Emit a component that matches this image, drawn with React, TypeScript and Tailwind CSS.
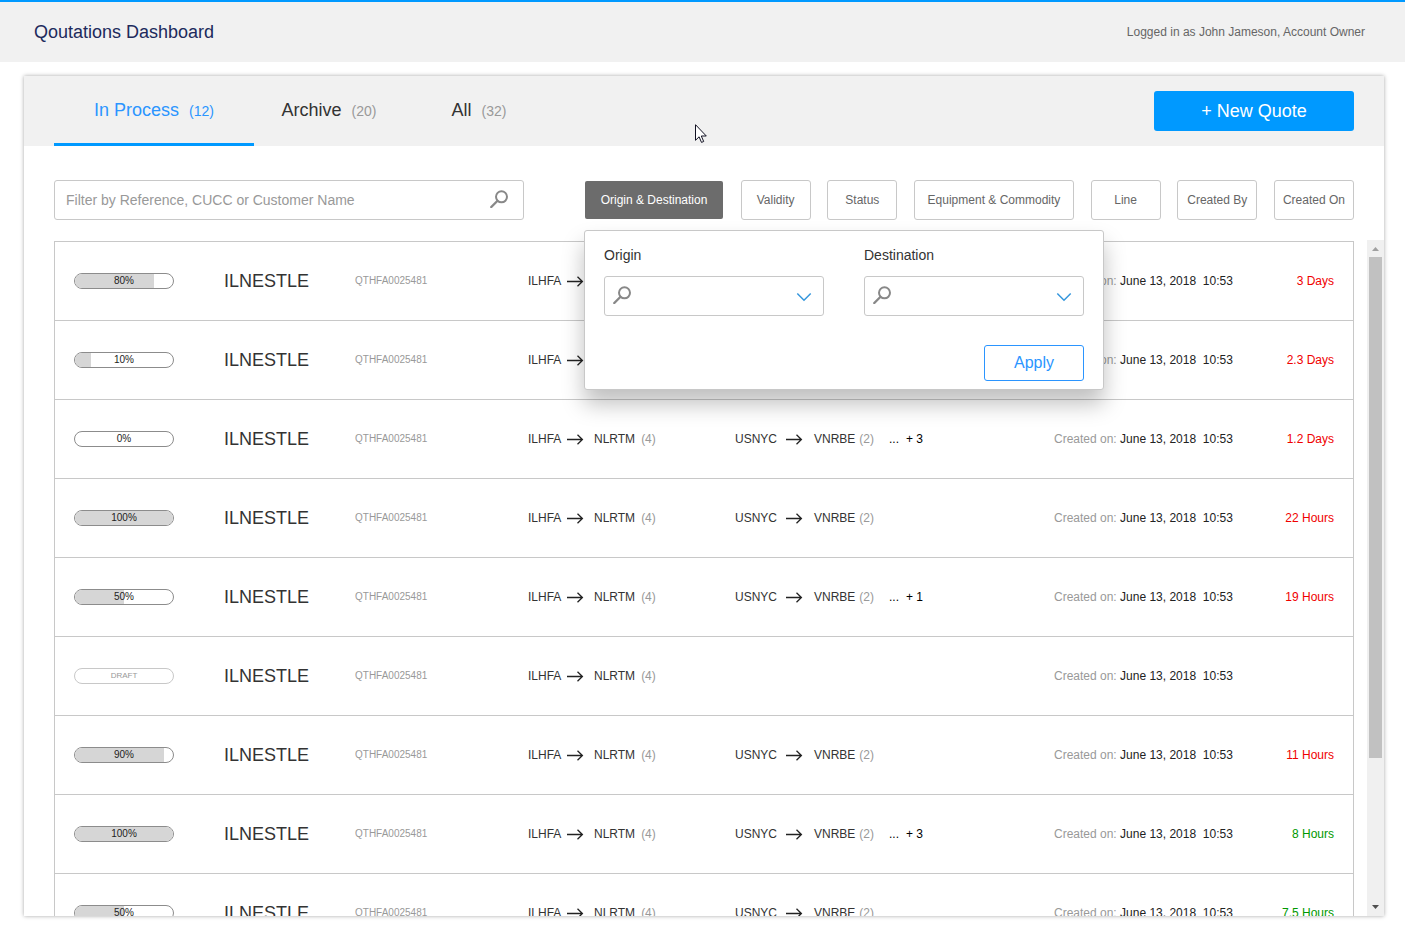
import { useState } from "react";
import clsx from "clsx";

type Quote = {
  progress: number | null;
  fill: number;
  extra?: string;
  second: boolean;
  due: string;
  dueColor: string;
};

const red = "text-[#f00000]";
const green = "text-[#009900]";

const quotes: Quote[] = [
  { progress: 80, fill: 81, second: true, due: "3 Days", dueColor: red },
  { progress: 10, fill: 16, second: true, due: "2.3 Days", dueColor: red },
  { progress: 0, fill: 0, extra: "+ 3", second: true, due: "1.2 Days", dueColor: red },
  { progress: 100, fill: 100, second: true, due: "22 Hours", dueColor: red },
  { progress: 50, fill: 50, extra: "+ 1", second: true, due: "19 Hours", dueColor: red },
  { progress: null, fill: 0, second: false, due: "", dueColor: red },
  { progress: 90, fill: 91, second: true, due: "11 Hours", dueColor: red },
  { progress: 100, fill: 100, extra: "+ 3", second: true, due: "8 Hours", dueColor: green },
  { progress: 50, fill: 50, second: true, due: "7.5 Hours", dueColor: green },
];

const tabs = [
  { label: "In Process", count: 12, width: "w-[200px]" },
  { label: "Archive", count: 20, width: "w-[150px]" },
  { label: "All", count: 32, width: "w-[150px]" },
];

const filters = [
  { label: "Validity", width: "w-[70px]" },
  { label: "Status", width: "w-[70px]" },
  { label: "Equipment & Commodity", width: "w-[160px]" },
  { label: "Line", width: "w-[70px]" },
  { label: "Created By", width: "w-20" },
  { label: "Created On", width: "w-20" },
];

function SearchIcon({ className }: { className?: string }) {
  return (
    <svg viewBox="0 0 18 18" className={clsx("w-[18px] h-[18px]", className)} fill="none" stroke="#888888" strokeWidth="2">
      <circle cx="11.5" cy="6.8" r="5.5" />
      <path d="M7.3 11 1.3 17" strokeWidth="2.4" strokeLinecap="round" />
    </svg>
  );
}

function Arrow() {
  return (
    <svg viewBox="0 0 17 12" className="w-[17px] h-3 shrink-0" fill="none" stroke="#222222" strokeWidth="1.3">
      <path d="M0 6.5h15.5M10.5 1.7l4.9 4.8-4.9 4.8" />
    </svg>
  );
}

function Progress({ progress, fill }: { progress: number | null; fill: number }) {
  if (progress === null) {
    return (
      <div className="w-[100px] h-4 rounded-full border border-[#c8c8c8] flex items-center justify-center text-[8px] text-[#999999]">
        DRAFT
      </div>
    );
  }

  return (
    <div className="relative w-[100px] h-4 rounded-full border border-[#8c8c8c] overflow-hidden">
      <div className="h-full bg-[#d6d6d6]" style={{ width: `${fill}%` }} />
      <span className="absolute inset-0 flex items-center justify-center text-[10px] leading-none text-[#222222]">
        {progress}%
      </span>
    </div>
  );
}

function PortSelect({ id, label }: { id: string; label: string }) {
  return (
    <div className="flex-1">
      <label htmlFor={id} className="block text-sm leading-5 text-[#333333]">
        {label}
      </label>
      <div className="relative mt-[11px]">
        <select id={id} className="block w-full h-10 pl-9 pr-9 appearance-none bg-white border border-[#c8c8c8] rounded-[3px] text-sm">
          <option value=""></option>
        </select>
        <SearchIcon className="absolute left-[9px] top-[10px] pointer-events-none" />
        <svg
          viewBox="0 0 16 10"
          className="absolute right-3 top-4 w-4 h-[10px] pointer-events-none"
          fill="none"
          stroke="#3496dc"
          strokeWidth="1.5"
        >
          <path d="M1.3 1.5 8 8.2l6.7-6.7" />
        </svg>
      </div>
    </div>
  );
}

export default function App() {
  const [tab, setTab] = useState("In Process");
  const [open, setOpen] = useState(true);

  return (
    <div className="relative h-screen flex flex-col bg-white font-['Liberation_Sans',Arial,sans-serif] text-[#333333]">
      {/* Header */}
      <header className="h-[62px] shrink-0 border-t-2 border-[#0099ff] bg-[#f1f1f1] flex items-center justify-between pl-[34px] pr-10">
        <h1 className="text-lg text-[#202a5c]">Qoutations Dashboard</h1>
        <span className="text-xs text-[#666666]">Logged in as John Jameson, Account Owner</span>
      </header>

      <main className="flex-1 min-h-0 flex flex-col mt-3.5 ml-6 mr-[21px] mb-[22px] bg-white shadow-[0_0_4px_rgba(0,0,0,0.35)]">
        {/* Tabs */}
        <div className="h-[70px] shrink-0 bg-[#f1f1f1] px-[30px] flex items-center justify-between">
          <nav className="h-full flex">
            {tabs.map((t) => (
              <button
                key={t.label}
                onClick={() => setTab(t.label)}
                className={clsx(
                  "h-full flex items-center justify-center border-b-3",
                  t.width,
                  tab === t.label ? "border-[#0099ff] text-[#2b95ff]" : "border-transparent"
                )}
              >
                <span className="text-lg">{t.label}</span>
                <span className={clsx("ml-2.5 pt-0.5 text-sm", tab !== t.label && "text-[#999999]")}>({t.count})</span>
              </button>
            ))}
          </nav>
          <button className="w-[200px] h-10 rounded-[3px] bg-[#0099ff] text-white text-lg">+ New Quote</button>
        </div>

        {/* Search and filters */}
        <div className="shrink-0 px-[30px] pt-[34px] pb-5 flex justify-between">
          <div className="relative w-[470px]">
            <input
              type="text"
              aria-label="Filter quotes"
              placeholder="Filter by Reference, CUCC or Customer Name"
              className="w-full h-10 pl-[11px] pr-10 border border-[#c8c8c8] rounded-[3px] text-sm placeholder:text-[#999999]"
            />
            <SearchIcon className="absolute right-4 top-[10px] pointer-events-none" />
          </div>

          <div className="w-[770px] flex justify-between">
            <div className="relative">
              <button
                onClick={() => setOpen(!open)}
                className="w-[140px] h-10 rounded-[3px] border border-transparent bg-clip-padding bg-[#6c6c6c] text-white text-xs"
              >
                Origin & Destination
              </button>

              {open && (
                <div className="absolute z-10 left-0 top-[50px] w-[520px] px-[19px] pt-3.5 pb-2 bg-white border border-[#c8c8c8] rounded-[3px] shadow-[0_14px_22px_rgba(0,0,0,0.25)]">
                  <div className="flex gap-10">
                    <PortSelect id="origin" label="Origin" />
                    <PortSelect id="destination" label="Destination" />
                  </div>
                  <div className="mt-[29px] flex justify-end">
                    <button className="w-[100px] h-9 rounded-[3px] border border-[#2b95ff] text-[#2b95ff] text-base">
                      Apply
                    </button>
                  </div>
                </div>
              )}
            </div>

            {filters.map((f) => (
              <button
                key={f.label}
                className={clsx("h-10 rounded-[3px] border border-[#c8c8c8] text-xs text-[#666666] whitespace-nowrap", f.width)}
              >
                {f.label}
              </button>
            ))}
          </div>
        </div>

        {/* Quotes */}
        <div className="flex-1 min-h-0 flex overflow-hidden">
          <div className="flex-1 pl-[30px] pr-[13px] pt-px overflow-hidden">
            <table className="w-full table-fixed border-separate border-spacing-0 border border-b-0 border-[#c8c8c8] text-xs whitespace-nowrap">
              <colgroup>
                <col className="w-[169px]" />
                <col className="w-[131px]" />
                <col className="w-[173px]" />
                <col className="w-[207px]" />
                <col className="w-[154px]" />
                <col className="w-[165px]" />
                <col />
                <col className="w-[100px]" />
              </colgroup>
              <tbody>
                {quotes.map((q, i) => (
                  <tr key={i} className="h-[79px] *:border-b *:border-[#c8c8c8]">
                    <td className="pl-[19px]">
                      <Progress progress={q.progress} fill={q.fill} />
                    </td>
                    <td className="text-lg">ILNESTLE</td>
                    <td className="text-[10px] text-[#999999]">QTHFA0025481</td>
                    <td>
                      <div className="flex items-center">
                        <span className="w-[39px]">ILHFA</span>
                        <Arrow />
                        <span className="ml-2.5">NLRTM</span>
                        <span className="ml-1.5 text-[#999999]">(4)</span>
                      </div>
                    </td>
                    <td>
                      {q.second && (
                        <div className="flex items-center">
                          <span className="w-[51px]">USNYC</span>
                          <Arrow />
                          <span className="ml-[11px]">VNRBE</span>
                          <span className="ml-1 text-[#999999]">(2)</span>
                        </div>
                      )}
                    </td>
                    <td className="text-black">
                      {q.extra && (
                        <>
                          ...<span className="ml-[7px]">{q.extra}</span>
                        </>
                      )}
                    </td>
                    <td>
                      <span className="text-[#999999]">Created on:</span>{" "}
                      <span className="text-[#222222]">June 13, 2018&nbsp; 10:53</span>
                    </td>
                    <td className={clsx("pr-[19px] text-right", q.dueColor)}>{q.due}</td>
                  </tr>
                ))}
              </tbody>
            </table>
          </div>

          {/* Scrollbar */}
          <div className="w-[17px] flex flex-col bg-[#f0f0f0]">
            <svg viewBox="0 0 17 17" className="w-[17px] h-[17px] shrink-0">
              <path d="M5 11l3.5-4 3.5 4z" fill="#a0a0a0" />
            </svg>
            <div className="flex-1 px-0.5">
              <div className="h-[78%] bg-[#c1c1c1]" />
            </div>
            <svg viewBox="0 0 17 17" className="w-[17px] h-[17px] shrink-0">
              <path d="M5 6l3.5 4L12 6z" fill="#505050" />
            </svg>
          </div>
        </div>
      </main>

      {/* Mouse pointer */}
      <svg viewBox="0 0 12 19" className="absolute left-[695px] top-[124px] w-3 h-[19px] pointer-events-none">
        <path
          d="M.5.7v15.6l3.6-3.5 2.4 5.6 2.2-.9-2.4-5.5h5z"
          fill="#ffffff"
          stroke="#111122"
          strokeWidth="1"
        />
      </svg>
    </div>
  );
}
